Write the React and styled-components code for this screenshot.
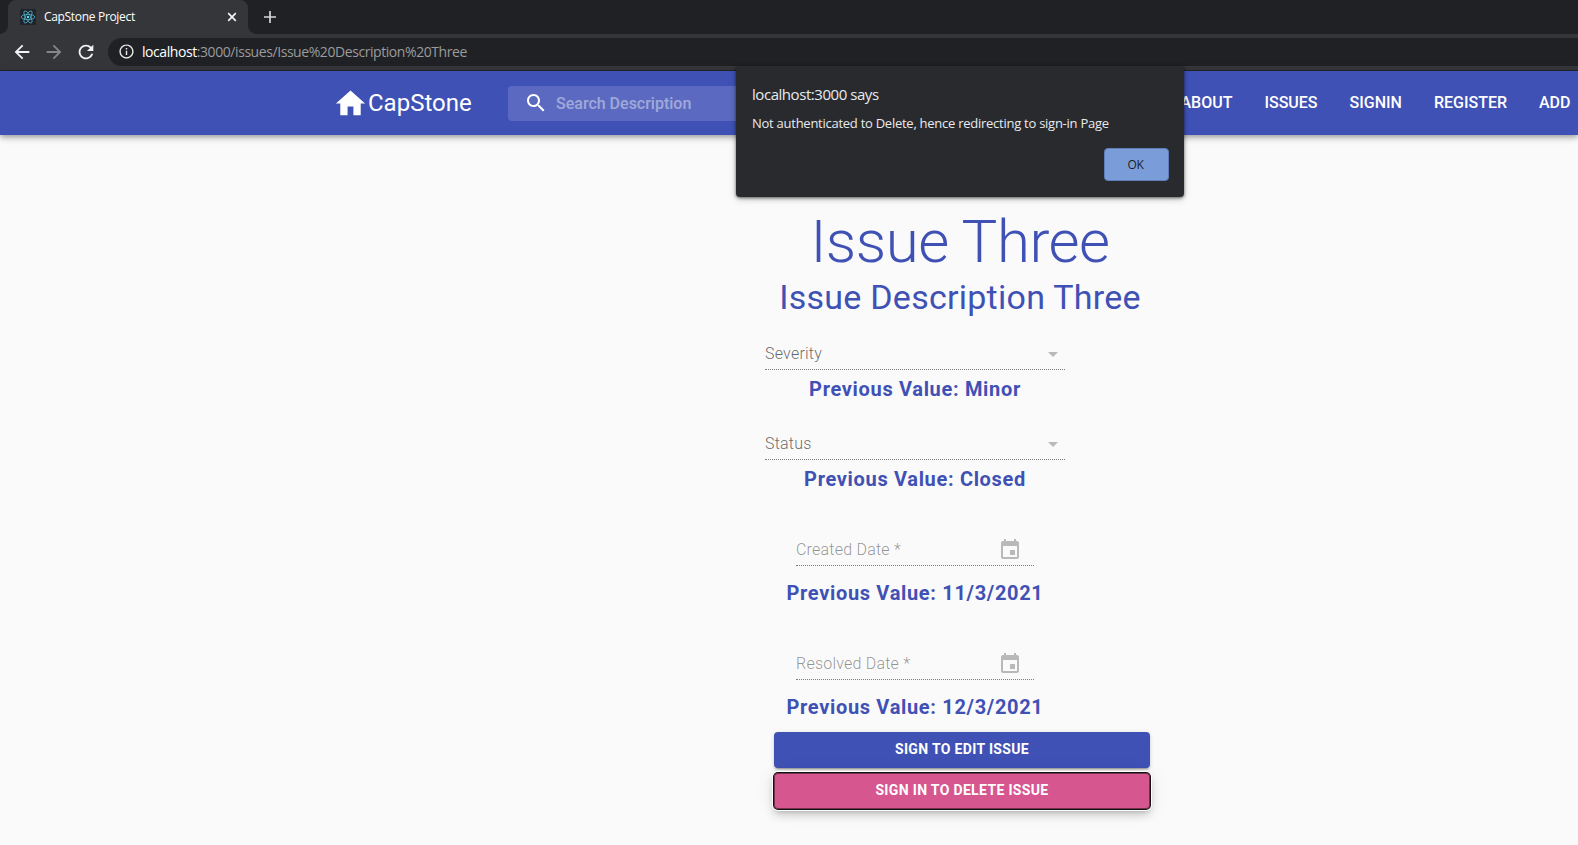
import React from "react";
import styled, { createGlobalStyle } from "styled-components";

const GlobalStyle = createGlobalStyle`
  * { box-sizing: border-box; }
  html, body { margin: 0; height: 100%; overflow: hidden; }
  body { background: #fafafa; font-family: Roboto, sans-serif; }
  button, input { font-family: inherit; border: 0; margin: 0; padding: 0; outline: 0; }
  h1, h2, p { margin: 0; font-weight: 400; }
  svg { display: block; flex: none; }
`;

const uiFont = `"Open Sans", "Noto Sans", sans-serif`;

const Window = styled.div`
  position: relative;
  width: 1578px;
  height: 845px;
  overflow: hidden;
`;

const TabStrip = styled.div`
  display: flex;
  height: 34px;
  padding-left: 8px;
  background: #202124;
  font-family: ${uiFont};
`;

const Tab = styled.div`
  position: relative;
  display: flex;
  align-items: center;
  width: 240px;
  height: 34px;
  padding: 0 10px 0 12px;
  border-radius: 8px 8px 0 0;
  background: #35363a;
  &::before, &::after {
    content: "";
    position: absolute;
    bottom: 0;
    width: 8px;
    height: 8px;
  }
  &::before { left: -8px; background: radial-gradient(circle at 0 0, transparent 7.5px, #35363a 8px); }
  &::after { right: -8px; background: radial-gradient(circle at 100% 0, transparent 7.5px, #35363a 8px); }
`;

const TabTitle = styled.span`
  flex: 1;
  margin-left: 8px;
  color: #fff;
  font-size: 12px;
  line-height: 16px;
  padding-bottom: 1px;
  letter-spacing: -0.32px;
  white-space: nowrap;
`;

const NewTab = styled.div`
  display: flex;
  align-items: center;
  margin-left: 16px;
`;

const Toolbar = styled.div`
  display: flex;
  align-items: center;
  height: 37px;
  padding: 0 0 1px 11px;
  background: #35363a;
  border-bottom: 1px solid #242528;
`;

const NavIcons = styled.div`
  display: flex;
  gap: 10px;
  width: 97px;
`;

const AddressBar = styled.div`
  display: flex;
  flex: 1;
  align-items: center;
  gap: 7px;
  height: 28px;
  padding-left: 10px;
  border-radius: 14px 0 0 14px;
  background: #202124;
  color: #9a9b9d;
  font-family: ${uiFont};
  font-size: 14px;
  letter-spacing: -0.43px;
  white-space: nowrap;
`;

const Host = styled.span`
  color: #fff;
`;

const AppBar = styled.header`
  position: relative;
  display: flex;
  align-items: center;
  height: 64px;
  padding-left: 333px;
  background: #3f51b5;
  color: #fff;
  box-shadow: 0 2px 4px -1px rgba(0,0,0,.2), 0 4px 5px 0 rgba(0,0,0,.14), 0 1px 10px 0 rgba(0,0,0,.12);
`;

const Brand = styled.div`
  display: flex;
  align-items: center;
  width: 175px;
  font-size: 24px;
  white-space: nowrap;
`;

const Search = styled.label`
  display: flex;
  align-items: center;
  width: 300px;
  height: 35px;
  padding-left: 16px;
  border-radius: 4px;
  background: rgba(255,255,255,.15);
`;

const SearchInput = styled.input`
  width: 200px;
  margin-left: 8px;
  background: transparent;
  color: #fff;
  font-size: 16px;
  font-weight: 500;
  &::placeholder { color: #fff; opacity: .42; }
`;

const NavLinks = styled.nav`
  display: flex;
  gap: 32px;
  margin-left: auto;
  padding: 0 7.5px 2px 0;
`;

const NavLink = styled.a`
  font-size: 16px;
  font-weight: 500;
  white-space: nowrap;
`;

const Detail = styled.main`
  display: flex;
  flex-direction: column;
  width: 394px;
  margin-left: 765px;
  padding-top: 71px;
  color: #3f51b5;
`;

const Title = styled.h1`
  padding-right: 4px;
  font-size: 60px;
  font-weight: 300;
  line-height: 72px;
  letter-spacing: -0.5px;
  text-align: center;
  white-space: nowrap;
`;

const Subtitle = styled.h2`
  padding-right: 4px;
  font-size: 34px;
  line-height: 38px;
  letter-spacing: 0.25px;
  text-align: center;
  white-space: nowrap;
`;

const Fields = styled.div`
  display: flex;
  flex-direction: column;
  align-items: center;
  width: 300px;
  padding-top: 22px;
`;

const Field = styled.div`
  display: flex;
  align-items: center;
  justify-content: space-between;
  width: ${(p) => (p.$date ? 238 : 300)}px;
  height: 32px;
  margin-top: ${(p) => p.$gap}px;
  padding-right: ${(p) => (p.$date ? 12 : 0)}px;
  border-bottom: 1px dotted rgba(0,0,0,.5);
  color: ${(p) => (p.$date ? "rgba(0,0,0,.43)" : "rgba(0,0,0,.6)")};
  font-size: 16px;
  font-weight: 300;
  letter-spacing: 0.22px;
`;

const Previous = styled.p`
  height: 32px;
  margin-top: ${(p) => p.$gap}px;
  font-size: 20px;
  font-weight: 700;
  line-height: 32px;
  letter-spacing: 0.67px;
  white-space: nowrap;
`;

const Actions = styled.div`
  display: flex;
  flex-direction: column;
  align-items: center;
  gap: 5px;
  padding-top: 9px;
`;

const Action = styled.button`
  width: 376px;
  height: 36px;
  padding-bottom: 2px;
  border-radius: 4px;
  background: ${(p) => (p.$danger ? "#d6568f" : "#3f51b5")};
  color: #fff;
  font-size: 14px;
  font-weight: 700;
  letter-spacing: 0.34px;
  box-shadow: ${(p) =>
    p.$danger
      ? "inset 0 0 0 1px rgba(16,16,16,.5), 0 0 0 1px #101010, 0 0 0 2px #fff, 0 3px 5px -1px rgba(0,0,0,.2), 0 6px 10px 0 rgba(0,0,0,.14), 0 1px 18px 0 rgba(0,0,0,.12)"
      : "0 3px 1px -2px rgba(0,0,0,.2), 0 2px 2px 0 rgba(0,0,0,.14), 0 1px 5px 0 rgba(0,0,0,.12)"};
`;

const Dialog = styled.div`
  position: absolute;
  top: 66px;
  left: 736px;
  display: flex;
  flex-direction: column;
  width: 448px;
  height: 131px;
  padding: 16px 15px 16px 16px;
  border-radius: 4px;
  background: #292a2d;
  color: #e8eaed;
  font-family: ${uiFont};
  box-shadow: 0 1px 3px rgba(0,0,0,.5), 0 2px 6px rgba(0,0,0,.25);
`;

const DialogTitle = styled.div`
  font-size: 15px;
  line-height: 24px;
  letter-spacing: -0.45px;
  white-space: nowrap;
`;

const DialogText = styled.div`
  margin-top: 7px;
  font-size: 13px;
  line-height: 20px;
  letter-spacing: -0.26px;
  white-space: nowrap;
`;

const DialogButton = styled.button`
  align-self: flex-end;
  width: 65px;
  height: 33px;
  margin-top: auto;
  padding-right: 2px;
  border: 1px solid #5f7fb8;
  border-radius: 4px;
  background: #7a9dd9;
  color: #202124;
  font-size: 12px;
  letter-spacing: -0.3px;
`;

const Glyph = ({ d, size = 24, color = "currentColor" }) => (
  <svg width={size} height={size} viewBox="0 0 24 24" fill={color}>
    <path d={d} />
  </svg>
);

const ReactLogo = () => (
  <svg width="16" height="16" viewBox="0 0 16 16" fill="none" stroke="#4db3cc" strokeWidth=".8">
    <rect width="16" height="16" rx="1.5" fill="#20232a" stroke="none" />
    <ellipse cx="8" cy="8" rx="6.8" ry="2.6" />
    <ellipse cx="8" cy="8" rx="6.8" ry="2.6" transform="rotate(60 8 8)" />
    <ellipse cx="8" cy="8" rx="6.8" ry="2.6" transform="rotate(120 8 8)" />
    <circle cx="8" cy="8" r="1.2" fill="#61dafb" stroke="none" />
  </svg>
);

const paths = {
  back: "M20 11H7.83l5.59-5.59L12 4l-8 8 8 8 1.41-1.41L7.83 13H20v-2z",
  forward: "M12 4l-1.41 1.41L16.17 11H4v2h12.17l-5.58 5.59L12 20l8-8z",
  reload:
    "M17.65 6.35C16.2 4.9 14.21 4 12 4c-4.42 0-7.99 3.58-7.99 8s3.57 8 7.99 8c3.73 0 6.84-2.55 7.73-6h-2.08c-.82 2.33-3.04 4-5.65 4-3.31 0-6-2.69-6-6s2.69-6 6-6c1.66 0 3.14.69 4.22 1.78L13 11h7V4l-2.35 2.35z",
  info: "M11 17h2v-6h-2v6zm1-15C6.48 2 2 6.48 2 12s4.48 10 10 10 10-4.48 10-10S17.52 2 12 2zm0 18c-4.41 0-8-3.59-8-8s3.59-8 8-8 8 3.59 8 8-3.59 8-8 8zM11 9h2V7h-2v2z",
  home: "M10 20v-6h4v6h5v-8h3L12 3 2 12h3v8z",
  search:
    "M15.5 14h-.79l-.28-.27C15.41 12.59 16 11.11 16 9.5 16 5.91 13.09 3 9.5 3S3 5.91 3 9.5 5.91 16 9.5 16c1.61 0 3.09-.59 4.23-1.57l.27.28v.79l5 4.99L20.49 19l-4.99-5zm-6 0C7.01 14 5 11.99 5 9.5S7.01 5 9.5 5 14 7.01 14 9.5 11.99 14 9.5 14z",
  arrow: "M7 10l5 5 5-5z",
  event:
    "M17 12h-5v5h5v-5zM16 1v2H8V1H6v2H5c-1.11 0-1.99.9-1.99 2L3 19c0 1.1.89 2 2 2h14c1.1 0 2-.9 2-2V5c0-1.1-.9-2-2-2h-1V1h-2zm3 18H5V8h14v11z",
};

const fields = [
  { label: "Severity", previous: "Minor", gap: 0, previousGap: 3 },
  { label: "Status", previous: "Closed", gap: 23, previousGap: 3 },
  { label: "Created Date *", previous: "11/3/2021", gap: 39, previousGap: 11, date: true },
  { label: "Resolved Date *", previous: "12/3/2021", gap: 39, previousGap: 11, date: true },
];

export default function App() {
  return (
    <Window>
      <GlobalStyle />
      <TabStrip>
        <Tab>
          <ReactLogo />
          <TabTitle>CapStone Project</TabTitle>
          <svg width="12" height="12" viewBox="0 0 12 12" stroke="#f1f3f4" strokeWidth="1.7">
            <path d="M2.2 2.2l7.6 7.6M9.8 2.2l-7.6 7.6" />
          </svg>
        </Tab>
        <NewTab>
          <svg width="12" height="12" viewBox="0 0 12 12" stroke="#d5d6d8" strokeWidth="1.7">
            <path d="M6 0v12M0 6h12" />
          </svg>
        </NewTab>
      </TabStrip>
      <Toolbar>
        <NavIcons>
          <Glyph d={paths.back} size={22} color="#f1f3f4" />
          <Glyph d={paths.forward} size={22} color="#85868a" />
          <Glyph d={paths.reload} size={22} color="#f1f3f4" />
        </NavIcons>
        <AddressBar>
          <Glyph d={paths.info} size={17} color="#e8eaed" />
          <span><Host>localhost</Host>:3000/issues/Issue%20Description%20Three</span>
        </AddressBar>
      </Toolbar>
      <AppBar>
        <Brand>
          <Glyph d={paths.home} size={35} />
          CapStone
        </Brand>
        <Search>
          <Glyph d={paths.search} />
          <SearchInput placeholder="Search Description" />
        </Search>
        <NavLinks>
          {["ABOUT", "ISSUES", "SIGNIN", "REGISTER", "ADD"].map((name) => (
            <NavLink key={name}>{name}</NavLink>
          ))}
        </NavLinks>
      </AppBar>
      <Detail>
        <Title>Issue Three</Title>
        <Subtitle>Issue Description Three</Subtitle>
        <Fields>
          {fields.map((f) => (
            <React.Fragment key={f.label}>
              <Field $date={f.date} $gap={f.gap}>
                {f.label}
                <Glyph d={f.date ? paths.event : paths.arrow} color="rgba(0,0,0,.26)" />
              </Field>
              <Previous $gap={f.previousGap}>Previous Value: {f.previous}</Previous>
            </React.Fragment>
          ))}
        </Fields>
        <Actions>
          <Action>SIGN TO EDIT ISSUE</Action>
          <Action $danger>SIGN IN TO DELETE ISSUE</Action>
        </Actions>
      </Detail>
      <Dialog role="alertdialog">
        <DialogTitle>localhost:3000 says</DialogTitle>
        <DialogText>Not authenticated to Delete, hence redirecting to sign-in Page</DialogText>
        <DialogButton>OK</DialogButton>
      </Dialog>
    </Window>
  );
}
